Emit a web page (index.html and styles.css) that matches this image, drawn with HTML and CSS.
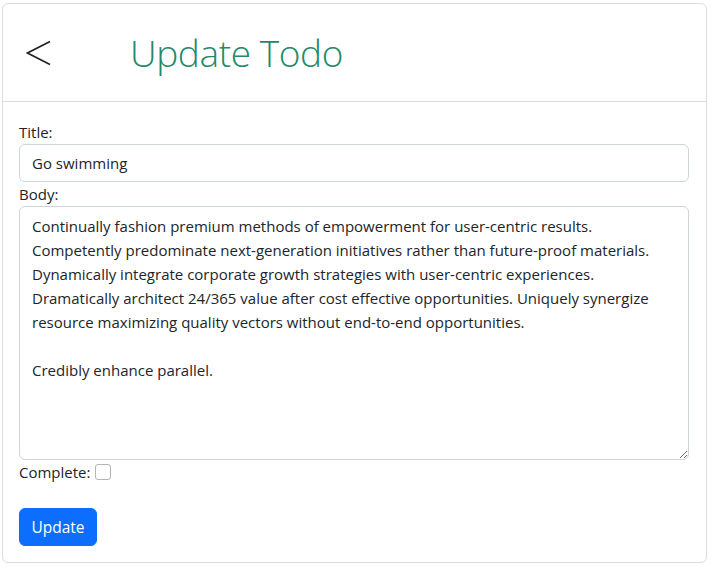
FILE: index.html
```html
<!DOCTYPE html>
<html>
<head>
<meta charset="utf-8">
<link rel="stylesheet" href="styles.css">
</head>
<body>
<div class="card">
  <div class="card-header">
    <a class="back" href="#" aria-label="Back">
      <svg width="26" height="26" viewBox="0 0 26 26"><polyline points="24,1.5 1.5,13 24,24.5" fill="none" stroke="#222" stroke-width="1.6"/></svg>
    </a>
    <h1 class="heading">Update Todo</h1>
  </div>
  <form class="card-body">
    <label class="label" for="title">Title:</label>
    <input class="control" id="title" type="text" value="Go swimming">
    <label class="label" for="body">Body:</label>
    <textarea class="control area" id="body">Continually fashion premium methods of empowerment for user-centric results. Competently predominate next-generation initiatives rather than future-proof materials. Dynamically integrate corporate growth strategies with user-centric experiences. Dramatically architect 24/365 value after cost effective opportunities. Uniquely synergize resource maximizing quality vectors without end-to-end opportunities.

Credibly enhance parallel.</textarea>
    <div class="check-row">
      <label class="label inline" for="complete">Complete:</label>
      <input class="check" id="complete" type="checkbox">
    </div>
    <button class="btn" type="button">Update</button>
  </form>
</div>
</body>
</html>
```
FILE: styles.css
```css
* { box-sizing: border-box; }
html, body { margin: 0; padding: 0; background: #fff; }
body {
  padding: 3px 4px 5px 2px;
  font-family: "Open Sans", "Noto Sans", sans-serif;
  font-size: 15px;
  color: #212529;
}
.card {
  border: 1px solid #dcdcdc;
  border-radius: 6px;
  height: 560px;
  display: flex;
  flex-direction: column;
}
.card-header {
  height: 100px;
  border-bottom: 1px solid #dcdcdc;
  display: flex;
  align-items: center;
  padding-left: 23px;
}
.back { display: flex; width: 26px; height: 26px; margin-top: 0; }
.heading {
  margin: 0 0 0 78px;
  font-weight: 300;
  font-size: 37px;
  color: #23896a;
  letter-spacing: -0.4px;
}
.card-body {
  padding: 18px 16px 16px 16px;
  display: flex;
  flex-direction: column;
  align-items: flex-start;
}
.label { display: block; line-height: 24px; margin-bottom: 0; }
.label.inline { display: inline; }
.control {
  display: block;
  width: 670px;
  font: inherit;
  color: #212529;
  border: 1px solid #ced4da;
  border-radius: 6px;
  padding: 6px 12px;
  line-height: 24px;
  background: #fff;
}
input.control { height: 38px; margin-bottom: 0; }
.area { height: 254px; resize: vertical; padding-top: 7px; }
.check-row { display: flex; align-items: center; gap: 5px; margin-top: 0; height: 24px; }
.check {
  appearance: none;
  -webkit-appearance: none;
  width: 16px; height: 16px;
  border: 1px solid #b5b5b5;
  border-radius: 3px;
  margin: 0;
  background: #fff;
}
.btn {
  margin-top: 24px;
  background: #0d6efd;
  color: #fff;
  border: 1px solid #0d6efd;
  border-radius: 6px;
  font: inherit;
  font-size: 15.5px;
  height: 38px;
  width: 78px;
  padding: 0;
}
```
